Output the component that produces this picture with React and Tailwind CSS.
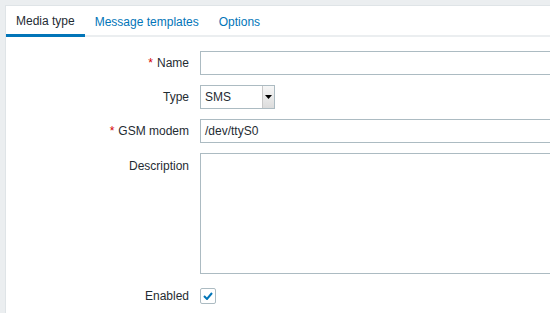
export default function App() {
  const label = "w-[194px] shrink-0 text-right pr-[11px]";
  return (
    <div
      className="w-[550px] h-[313px] overflow-hidden bg-[#ebeef0] pt-[5px] pl-[5px] text-[12px] text-[#1f2c33]"
      style={{ fontFamily: '"Liberation Sans", Arial, sans-serif' }}
    >
      <div className="w-[600px] h-[400px] bg-white border border-[#dfe4e7]">
        <div className="flex h-[31px] border-b-2 border-[#ebeef0]">
          <div className="h-[31px] px-[10px] flex items-center border-b-[3px] border-[#0275b8] pt-[1px] mb-[-2px]">
            Media type
          </div>
          <div className="h-[31px] px-[10px] flex items-center text-[#0275b8] pt-[1px]">
            Message templates
          </div>
          <div className="h-[31px] px-[10px] flex items-center text-[#0275b8] pt-[1px]">
            Options
          </div>
        </div>

        <div className="pt-[14px] flex flex-col gap-[10px]">
          <div className="flex items-center">
            <div className={label}>
              <span className="text-[#d40000] mr-[4px]">*</span>Name
            </div>
            <div className="w-[453px] h-[24px] border border-[#acbbc2] bg-white" />
          </div>

          <div className="flex items-center">
            <div className={label}>Type</div>
            <div className="w-[75px] h-[24px] border border-[#acbbc2] bg-white flex items-center">
              <span className="pl-[4px] flex-1">SMS</span>
              <div className="w-[12px] h-[22px] bg-gradient-to-b from-[#f7f7f7] to-[#dcdcdc] border-l border-[#c8c8c8] flex items-center justify-center">
                <svg width="7" height="4" viewBox="0 0 7 4">
                  <path d="M0 0h7L3.5 4z" fill="#000" />
                </svg>
              </div>
            </div>
          </div>

          <div className="flex items-center">
            <div className={label}>
              <span className="text-[#d40000] mr-[4px]">*</span>GSM modem
            </div>
            <div className="w-[453px] h-[24px] border border-[#acbbc2] bg-white flex items-center pl-[4px]">
              /dev/ttyS0
            </div>
          </div>

          <div className="flex items-start">
            <div className={`${label} pt-[4px]`}>Description</div>
            <div className="w-[453px] h-[121px] border border-[#acbbc2] bg-white" />
          </div>

          <div className="flex items-center mt-[3px]">
            <div className={label}>Enabled</div>
            <div className="w-[16px] h-[16px] border border-[#acbbc2] rounded-[2px] bg-white flex items-center justify-center">
              <svg width="10" height="8" viewBox="0 0 10 8">
                <path d="M1 4l3 3 5-6" fill="none" stroke="#0275b8" strokeWidth="2" />
              </svg>
            </div>
          </div>
        </div>
      </div>
    </div>
  );
}
